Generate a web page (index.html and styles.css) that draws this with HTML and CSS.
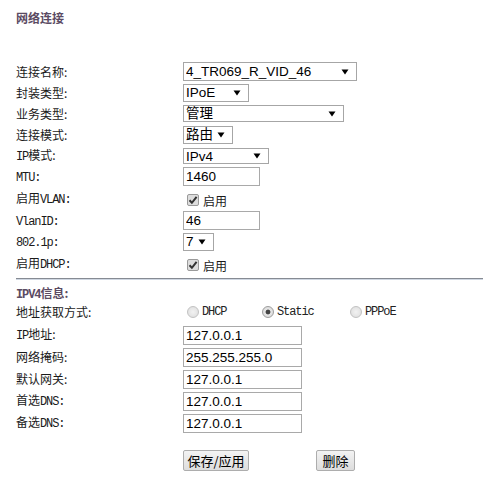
FILE: index.html
```html
<!DOCTYPE html>
<html lang="zh-CN">
<head>
    <meta charset="UTF-8">
    <title>网络连接</title>
    <link rel="stylesheet" href="styles.css">
</head>
<body>
    <h1 class="title">网络连接</h1>

    <div class="form">
        <div class="row">
            <span class="label">连接名称:</span>
            <select class="sel w-name">
                <option>4_TR069_R_VID_46</option>
            </select>
        </div>
        <div class="row">
            <span class="label">封装类型:</span>
            <select class="sel w-encap">
                <option>IPoE</option>
                <option>PPPoE</option>
            </select>
        </div>
        <div class="row">
            <span class="label">业务类型:</span>
            <select class="sel w-service">
                <option>管理</option>
            </select>
        </div>
        <div class="row">
            <span class="label">连接模式:</span>
            <select class="sel w-mode">
                <option>路由</option>
                <option>桥接</option>
            </select>
        </div>
        <div class="row">
            <span class="label"><span class="en">IP</span>模式:</span>
            <select class="sel w-ip">
                <option>IPv4</option>
                <option>IPv6</option>
            </select>
        </div>
        <div class="row">
            <span class="label"><span class="en">MTU:</span></span>
            <input type="text" class="txt w-short" value="1460">
        </div>
        <div class="row row-check">
            <span class="label">启用<span class="en">VLAN:</span></span>
            <label class="check"><input type="checkbox" class="chk" checked>启用</label>
        </div>
        <div class="row">
            <span class="label"><span class="en">VlanID:</span></span>
            <input type="text" class="txt w-short" value="46">
        </div>
        <div class="row">
            <span class="label"><span class="en">802.1p:</span></span>
            <select class="sel w-prio">
                <option>7</option>
            </select>
        </div>
        <div class="row row-check">
            <span class="label">启用<span class="en">DHCP:</span></span>
            <label class="check"><input type="checkbox" class="chk" checked>启用</label>
        </div>
    </div>

    <div class="divider"></div>

    <div class="form">
        <div class="section-title"><span class="en">IPV4</span>信息:</div>
        <div class="row row-radio">
            <span class="label">地址获取方式:</span>
            <div class="radios">
                <label class="radio"><input type="radio" name="mode" class="rad"><span class="en">DHCP</span></label>
                <label class="radio"><input type="radio" name="mode" class="rad" checked><span class="en">Static</span></label>
                <label class="radio"><input type="radio" name="mode" class="rad"><span class="en">PPPoE</span></label>
            </div>
        </div>
        <div class="row row-ip">
            <span class="label"><span class="en">IP</span>地址:</span>
            <input type="text" class="txt w-long" value="127.0.0.1">
        </div>
        <div class="row row-ip">
            <span class="label">网络掩码:</span>
            <input type="text" class="txt w-long" value="255.255.255.0">
        </div>
        <div class="row row-ip">
            <span class="label">默认网关:</span>
            <input type="text" class="txt w-long" value="127.0.0.1">
        </div>
        <div class="row row-ip">
            <span class="label">首选<span class="en">DNS:</span></span>
            <input type="text" class="txt w-long" value="127.0.0.1">
        </div>
        <div class="row row-ip">
            <span class="label">备选<span class="en">DNS:</span></span>
            <input type="text" class="txt w-long" value="127.0.0.1">
        </div>
    </div>

    <div class="actions">
        <button class="btn btn-save">保存/应用</button>
        <button class="btn btn-del">删除</button>
    </div>
</body>
</html>
```

FILE: styles.css
```css
body {
    margin: 0;
    padding: 0 0 0 16px;
    font-family: "Noto Sans CJK SC", sans-serif;
    font-size: 12px;
    color: #1a1a1a;
    background: #fff;
}
.en {
    font-family: "Liberation Mono", monospace;
    font-size: 12px;
    letter-spacing: -1.1px;
}
.title {
    margin: 0;
    padding-top: 11px;
    height: 14px;
    line-height: 14px;
    font-size: 12px;
    font-weight: bold;
    color: #5b4b63;
}
.form {
    margin-top: 36px;
}
.row {
    display: flex;
    align-items: center;
    height: 21px;
}
.row-check {
    height: 23px;
}
.row-ip {
    height: 22px;
}
.label {
    width: 167px;
    flex-shrink: 0;
    line-height: 14px;
}
.sel {
    appearance: none;
    -webkit-appearance: none;
    box-sizing: border-box;
    height: 18px;
    margin: 0;
    padding: 0 14px 0 2px;
    border: 1px solid #a6a6a6;
    border-radius: 0;
    font-family: "Liberation Sans", "Noto Sans CJK SC", sans-serif;
    font-size: 13.5px;
    line-height: 16px;
    color: #000;
    background: #fff url("data:image/svg+xml;utf8,<svg xmlns='http://www.w3.org/2000/svg' width='8' height='6'><path d='M0.5 0.5h7L4 5.5z' fill='black'/></svg>") no-repeat right 7px center;
}
.w-name { width: 174px; height: 19px; }
.w-encap { width: 66px; }
.w-service { width: 161px; height: 17px; }
.w-mode { width: 50px; }
.w-ip { width: 86px; height: 16px; }
.w-prio { width: 31px; }
.txt {
    box-sizing: border-box;
    height: 19px;
    margin: 0;
    padding: 0 2px;
    border: 1px solid #a9a9a9;
    font-family: "Liberation Sans", sans-serif;
    font-size: 13.5px;
    color: #000;
    outline: none;
}
.w-short { width: 77px; }
.w-long { width: 119px; }
.check {
    display: flex;
    align-items: center;
    font-size: 12px;
    padding-top: 3px;
}
.chk {
    appearance: none;
    -webkit-appearance: none;
    width: 12px;
    height: 12px;
    margin: 0 4px 0 4px;
    border: 1px solid #9a9a9a;
    border-radius: 2px;
    background: #ddd url("data:image/svg+xml;utf8,<svg xmlns='http://www.w3.org/2000/svg' width='10' height='10'><path d='M1.5 5.2l2.4 2.6L8.6 1.8' stroke='%23333' stroke-width='2' fill='none'/></svg>") no-repeat center;
}
.divider {
    margin-top: 3px;
    border-top: 1px solid #868b93;
    border-bottom: 1px solid #cfd7e2;
}
.divider + .form {
    margin-top: 0;
}
.section-title {
    height: 14px;
    padding-top: 6px;
    line-height: 14px;
    font-weight: bold;
    color: #5b4b63;
}
.row-radio {
    height: 24px;
}
.radios {
    display: grid;
    grid-template-columns: 75px 88px auto;
}
.radio {
    display: flex;
    align-items: center;
    color: #222;
}
.rad {
    appearance: none;
    -webkit-appearance: none;
    width: 12px;
    height: 12px;
    margin: 0 3px 0 4px;
    border: 1px solid #c2c2c2;
    border-radius: 50%;
    background: radial-gradient(circle, #f2f2f2 0, #dcdcdc 100%);
}
.rad:checked {
    border-color: #9d9d9d;
    background: radial-gradient(circle, #444 0, #444 2px, #e6e6e6 2.8px, #d6d6d6 100%);
}
.actions {
    display: flex;
    margin: 16px 0 0 167px;
}
.btn {
    box-sizing: border-box;
    height: 21px;
    padding: 0;
    border: 1px solid #adadad;
    border-radius: 2px;
    background: linear-gradient(#f3f3f3, #dddddd);
    font-family: "Noto Sans CJK SC", sans-serif;
    font-size: 13px;
    color: #000;
    cursor: pointer;
}
.btn-save {
    width: 66px;
}
.btn-del {
    width: 39px;
    margin-left: 67px;
}
```
